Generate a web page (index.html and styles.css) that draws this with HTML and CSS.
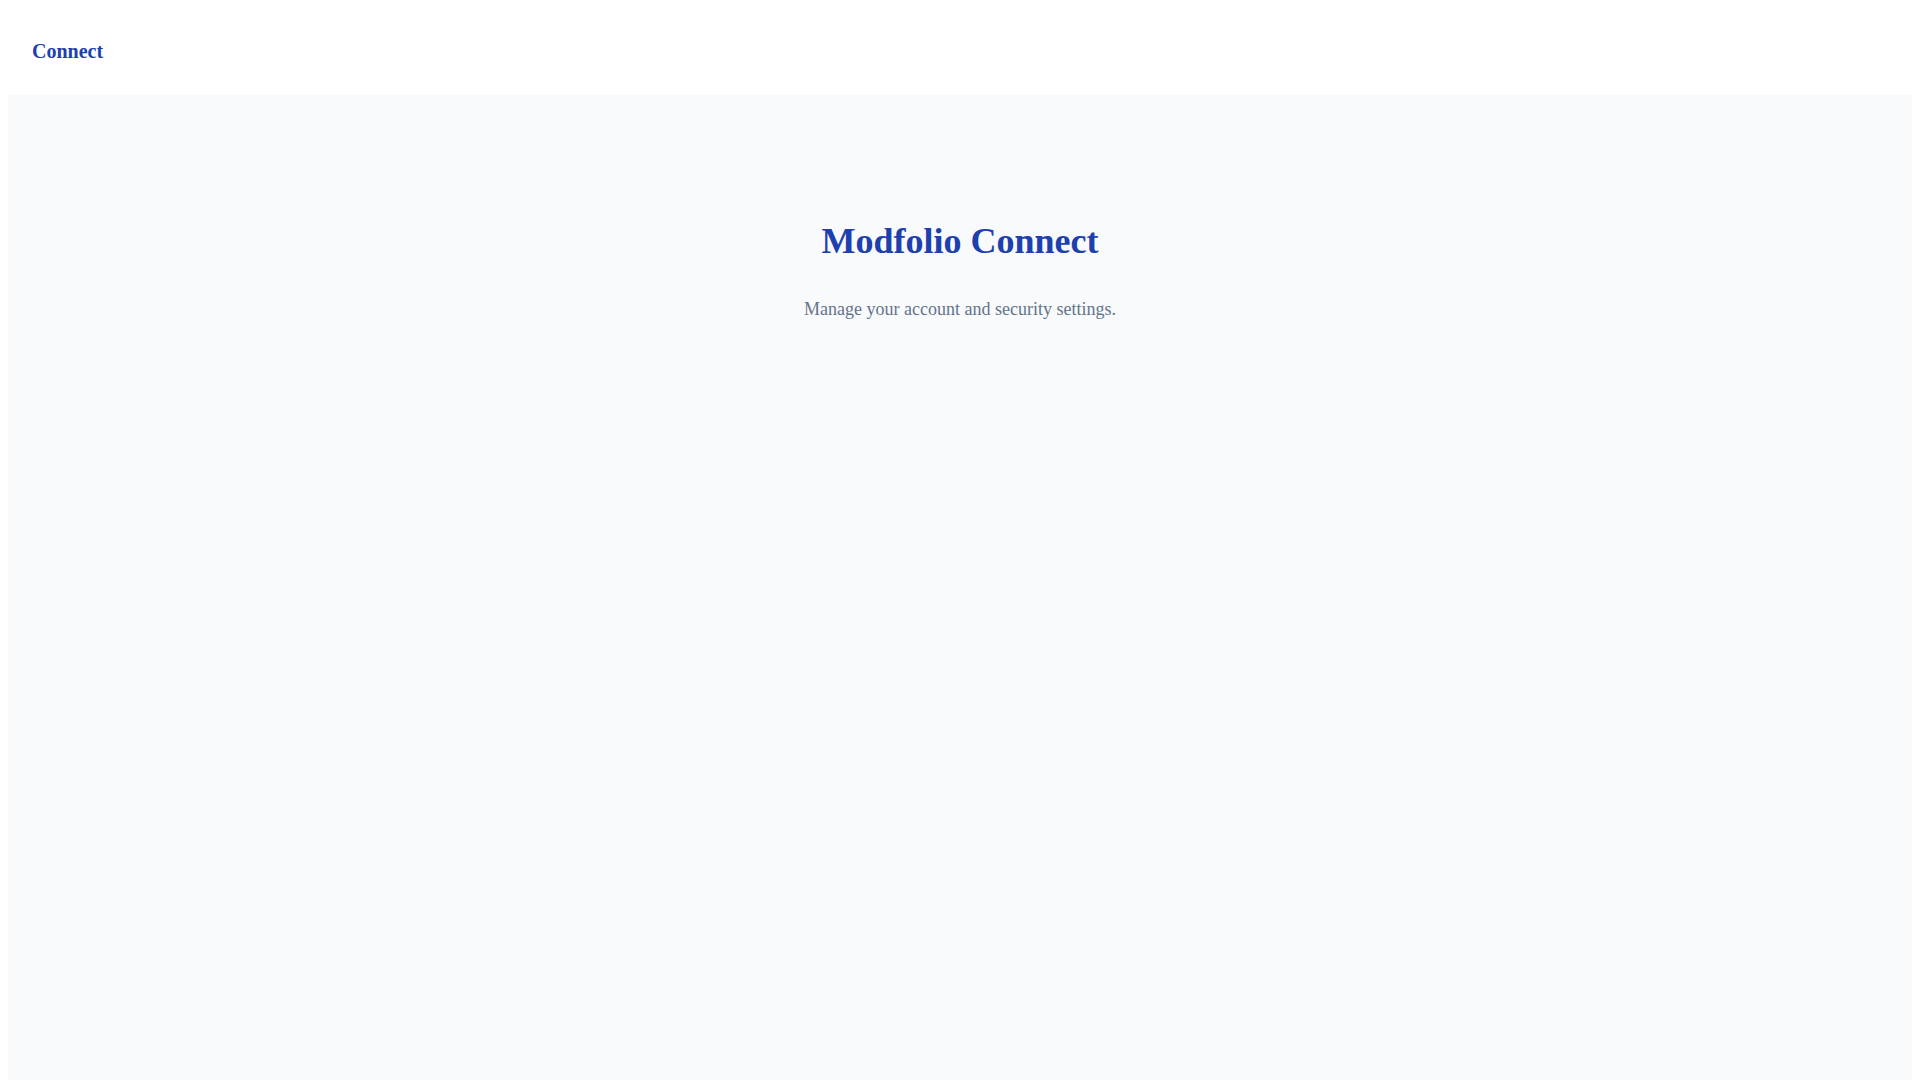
FILE: index.html
```html
<!DOCTYPE html>
<html lang="en">
<head>
    <meta charset="UTF-8">
    <meta name="viewport" content="width=device-width, initial-scale=1.0">
    <title>Modfolio Connect</title>
    <link rel="stylesheet" href="styles.css">
</head>
<body>
    <header class="topbar">
        <a class="brand" href="#">Connect</a>
    </header>

    <main class="content">
        <section class="intro">
            <h1 class="intro-title">Modfolio Connect</h1>
            <p class="intro-text">Manage your account and security settings.</p>
        </section>
    </main>
</body>
</html>
```

FILE: styles.css
```css
:root {
    --brand: #1e40af;
    --muted: #64748b;
    --surface: #f8fafc;
}

body {
    margin: 8px;
    font-family: "Liberation Serif", "Times New Roman", serif;
    background: #ffffff;
}

.topbar {
    display: flex;
    align-items: center;
    padding: 32px 24px;
}

.brand {
    font-size: 20px;
    font-weight: bold;
    line-height: 23px;
    color: var(--brand);
    text-decoration: none;
}

.content {
    background: var(--surface);
    min-height: 1000px;
    padding-top: 125px;
}

.intro {
    text-align: center;
}

.intro-title {
    margin: 0;
    font-size: 36px;
    line-height: 1.2;
    font-weight: bold;
    color: var(--brand);
}

.intro-text {
    margin: 36px 0 0;
    font-size: 18px;
    color: var(--muted);
}
```
